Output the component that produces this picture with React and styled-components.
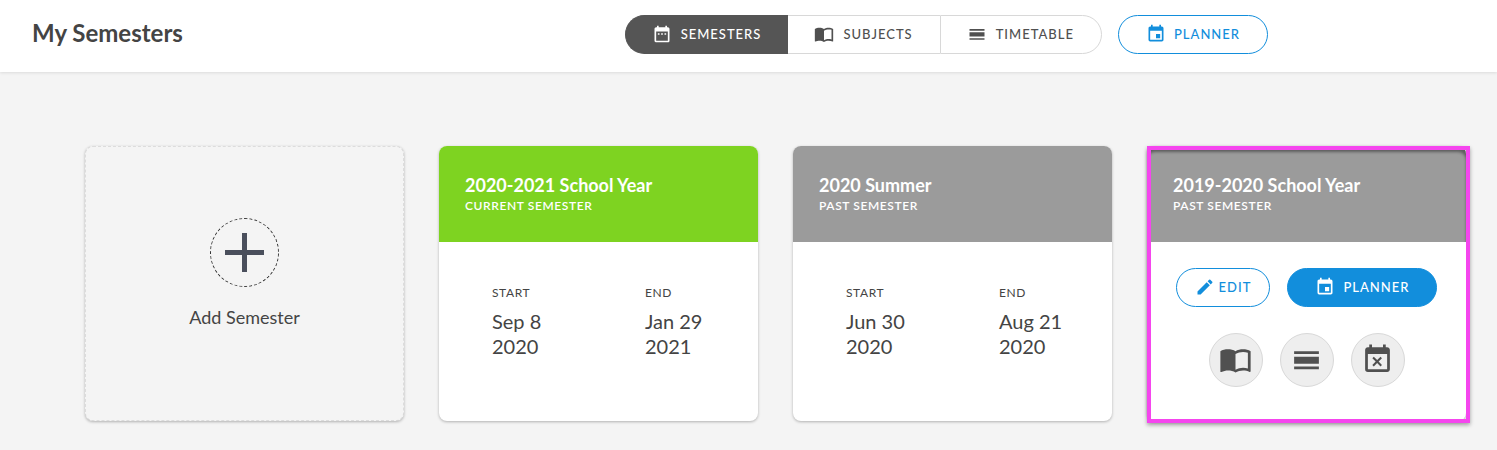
import React from "react";
import styled, { createGlobalStyle, css } from "styled-components";
import {
  MdDateRange,
  MdEdit,
  MdEvent,
  MdEventBusy,
  MdImportContacts
} from "react-icons/md";

const GlobalStyle = createGlobalStyle`
  * {
    box-sizing: border-box;
  }

  body {
    margin: 0;
    background-color: #f4f4f4;
    color: #444444;
    font-family: Lato, "Liberation Sans", sans-serif;
  }

  button {
    font-family: inherit;
    cursor: pointer;
  }
`;

const Header = styled.header`
  display: flex;
  align-items: flex-start;
  justify-content: space-between;
  padding: 15px 229px 18px 32px;
  background-color: #ffffff;
  box-shadow: 0 1px 3px rgba(0, 0, 0, 0.1);
`;

const Title = styled.h1`
  margin: 0;
  font-size: 24px;
  line-height: 36px;
  font-weight: 700;
`;

const Nav = styled.nav`
  display: flex;
  gap: 16px;
`;

const Tabs = styled.div`
  display: flex;
`;

const pillText = css`
  display: flex;
  align-items: center;
  height: 39px;
  font-size: 13px;
  line-height: 16px;
  font-weight: 500;
  letter-spacing: 1px;
  text-transform: uppercase;

  svg {
    flex: none;
    width: 20px;
    height: 20px;
  }
`;

const Tab = styled.button`
  ${pillText}
  gap: 9px;
  padding: 0 27px 2px 26px;
  border: 1px solid ${({ $active }) => ($active ? "#555555" : "#d8d8d8")};
  background-color: ${({ $active }) => ($active ? "#555555" : "#ffffff")};
  color: ${({ $active }) => ($active ? "#ffffff" : "#505050")};

  & + & {
    border-left-width: 0;
  }

  & + & + & {
    border-left-width: 1px;
  }

  &:first-child {
    border-radius: 20px 0 0 20px;
  }

  &:not(:last-child) {
    border-right-width: 0;
  }

  &:last-child {
    border-radius: 0 20px 20px 0;
  }
`;

const Pill = styled.button`
  ${pillText}
  gap: ${({ $compact }) => ($compact ? "4px" : "8px")};
  padding: ${({ $compact }) => ($compact ? "0 18px 2px" : "0 27px 2px")};
  border: 1px solid #128edc;
  border-radius: 20px;
  background-color: ${({ $filled }) => ($filled ? "#128edc" : "#ffffff")};
  color: ${({ $filled }) => ($filled ? "#ffffff" : "#128edc")};
`;

const Grid = styled.main`
  display: grid;
  grid-template-columns: repeat(4, 1fr);
  gap: 35px;
  padding: 74px 31px 29px 85px;
`;

const cardBox = css`
  min-height: 275px;
  border-radius: 8px;
  box-shadow: 0 1px 3px rgba(0, 0, 0, 0.28);
`;

const AddCard = styled.button`
  ${cardBox}
  display: flex;
  flex-direction: column;
  align-items: center;
  justify-content: center;
  gap: 17px;
  padding-bottom: 20px;
  border: 1px dashed #dcdcdc;
  background-color: #f4f4f4;
  color: #444444;
  font-size: 18px;
  line-height: 26px;
`;

const AddIcon = styled.span`
  display: flex;
  align-items: center;
  justify-content: center;
  width: 69px;
  height: 69px;
  border: 1px dashed #333333;
  border-radius: 50%;
`;

const Card = styled.article`
  ${cardBox}
  position: relative;
  background-color: #ffffff;
`;

const Highlight = styled.div`
  position: absolute;
  top: 0;
  right: -4px;
  bottom: -2px;
  left: 0;
  border: 4px solid #f545ee;
  box-shadow: 0 2px 4px rgba(0, 0, 0, 0.35);
  pointer-events: none;
`;

const CardHeader = styled.div`
  height: 96px;
  padding: 28px 26px;
  border-radius: 8px 8px 0 0;
  background-color: ${({ $current }) => ($current ? "#7ed321" : "#9b9b9b")};
  box-shadow: ${({ $selected }) =>
    $selected ? "inset 0 6px 3px rgba(0, 0, 0, 0.4)" : "none"};
  color: #ffffff;
`;

const CardTitle = styled.h2`
  margin: 0;
  font-size: 18px;
  line-height: 22px;
  font-weight: 700;
`;

const CardStatus = styled.p`
  margin: 0;
  font-size: 12px;
  line-height: 20px;
  font-weight: 600;
  letter-spacing: 0.05em;
  text-transform: uppercase;
`;

const Dates = styled.dl`
  display: grid;
  grid-template-columns: 1fr 60px;
  margin: 0;
  padding: 42px 53px;

  dt {
    margin-bottom: 7px;
    font-size: 12px;
    line-height: 18px;
    letter-spacing: 0.05em;
    text-transform: uppercase;
  }

  dd {
    margin: 0;
    font-size: 20px;
    line-height: 25px;
    white-space: nowrap;
  }
`;

const Actions = styled.div`
  display: flex;
  justify-content: center;
  gap: 17px;
  padding-top: 26px;
`;

const RoundButton = styled.button`
  display: flex;
  align-items: center;
  justify-content: center;
  width: 54px;
  height: 54px;
  padding: 0 0 2px;
  border: 1px solid #d8d8d8;
  border-radius: 50%;
  background-color: #eeeeee;
  color: #505050;

  svg {
    width: 33px;
    height: 33px;
  }
`;

const TimetableIcon = () => (
  <svg viewBox="0 0 24 24" fill="currentColor" aria-hidden="true">
    <path d="M3 17h18v2H3zM3 10h18v5H3zM3 6h18v2H3z" />
  </svg>
);

const PlusIcon = () => (
  <svg width="39" height="39" viewBox="0 0 39 39" aria-hidden="true">
    <path d="M17 0h5v17h17v5H22v17h-5V22H0v-5h17z" fill="#4a4f5c" />
  </svg>
);

const semesters = [
  {
    name: "2020-2021 School Year",
    current: true,
    start: ["Sep 8", "2020"],
    end: ["Jan 29", "2021"]
  },
  {
    name: "2020 Summer",
    start: ["Jun 30", "2020"],
    end: ["Aug 21", "2020"]
  },
  { name: "2019-2020 School Year", selected: true }
];

const SemesterDate = ({ label, value }) => (
  <div>
    <dt>{label}</dt>
    <dd>
      {value[0]}
      <br />
      {value[1]}
    </dd>
  </div>
);

const SemesterActions = () => (
  <>
    <Actions>
      <Pill $compact>
        <MdEdit />
        Edit
      </Pill>
      <Pill $filled>
        <MdEvent />
        Planner
      </Pill>
    </Actions>
    <Actions>
      <RoundButton aria-label="Subjects">
        <MdImportContacts />
      </RoundButton>
      <RoundButton aria-label="Timetable">
        <TimetableIcon />
      </RoundButton>
      <RoundButton aria-label="Holidays">
        <MdEventBusy />
      </RoundButton>
    </Actions>
  </>
);

const SemesterCard = ({ semester }) => (
  <Card>
    <CardHeader $current={semester.current} $selected={semester.selected}>
      <CardTitle>{semester.name}</CardTitle>
      <CardStatus>
        {semester.current ? "Current Semester" : "Past Semester"}
      </CardStatus>
    </CardHeader>
    {semester.selected ? (
      <SemesterActions />
    ) : (
      <Dates>
        <SemesterDate label="Start" value={semester.start} />
        <SemesterDate label="End" value={semester.end} />
      </Dates>
    )}
    {semester.selected && <Highlight />}
  </Card>
);

export default function App() {
  return (
    <>
      <GlobalStyle />
      <Header>
        <Title>My Semesters</Title>
        <Nav>
          <Tabs>
            <Tab $active>
              <MdDateRange />
              Semesters
            </Tab>
            <Tab>
              <MdImportContacts />
              Subjects
            </Tab>
            <Tab>
              <TimetableIcon />
              Timetable
            </Tab>
          </Tabs>
          <Pill>
            <MdEvent />
            Planner
          </Pill>
        </Nav>
      </Header>
      <Grid>
        <AddCard>
          <AddIcon>
            <PlusIcon />
          </AddIcon>
          Add Semester
        </AddCard>
        {semesters.map(semester => (
          <SemesterCard key={semester.name} semester={semester} />
        ))}
      </Grid>
    </>
  );
}
